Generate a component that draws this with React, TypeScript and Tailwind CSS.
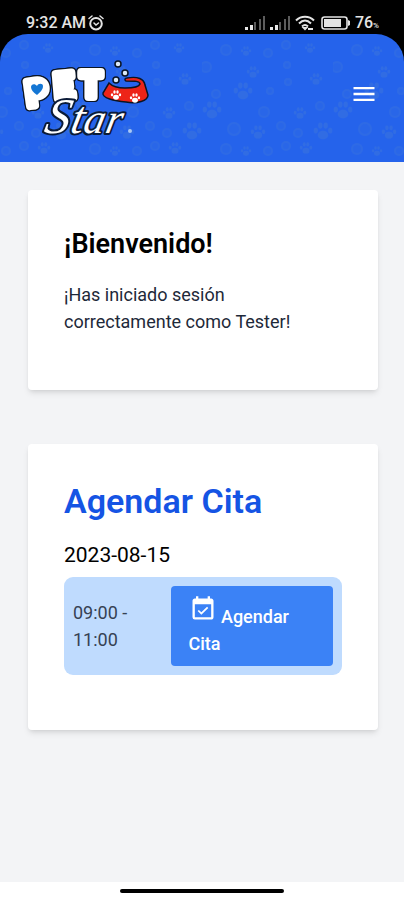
import { MdEventAvailable, MdMenu } from "react-icons/md";

const spots: [number, number, number][] = [
  [24, 16, 5], [66, 19, 4], [84, 11, 4], [85, 31, 3], [86, 48, 3], [68, 57, 3],
  [62, 78, 5], [118, 72, 4], [32, 95, 6], [79, 92, 4], [96, 99, 4], [24, 115, 5],
  [84, 112, 4], [66, 117, 4], [4, 33, 5], [14, 60, 4],
];
const paws: [number, number, number][] = [
  [44, 17, 5], [51, 38, 6], [114, 45, 6], [41, 57, 9], [10, 76, 9], [98, 79, 6],
  [56, 98, 7], [121, 97, 9], [104, 114, 6], [44, 117, 5], [108, 14, 5],
];

function Paw({ x, y, s }: { x: number; y: number; s: number }) {
  return (
    <g transform={`translate(${x} ${y}) scale(${s})`}>
      <ellipse cx="0" cy="0.45" rx="0.58" ry="0.48" />
      <ellipse cx="-0.8" cy="-0.05" rx="0.23" ry="0.32" />
      <ellipse cx="-0.3" cy="-0.6" rx="0.24" ry="0.34" />
      <ellipse cx="0.3" cy="-0.6" rx="0.24" ry="0.34" />
      <ellipse cx="0.8" cy="-0.05" rx="0.23" ry="0.32" />
    </g>
  );
}

function PatternBackground() {
  return (
    <svg className="absolute inset-0 size-full" aria-hidden="true">
      <defs>
        <pattern id="pets" x="71" y="0" width="131" height="128" patternUnits="userSpaceOnUse">
          <g fill="#6b9bb8" opacity="0.16">
            {paws.map(([x, y, s]) => (
              <Paw key={`${x}-${y}`} x={x} y={y} s={s} />
            ))}
          </g>
          <g fill="#6b9bb8" fillOpacity="0.4" stroke="#6b9bb8" strokeWidth="2" opacity="0.12">
            {spots.map(([x, y, r]) => (
              <circle key={`${x}-${y}`} cx={x} cy={y} r={r} />
            ))}
          </g>
        </pattern>
      </defs>
      <rect width="100%" height="100%" fill="url(#pets)" />
    </svg>
  );
}

function Logo() {
  return (
    <svg viewBox="0 0 132 84" className="h-[84px] w-[132px] overflow-visible" role="img" aria-label="Pet Star">
      <g
        className="[filter:drop-shadow(1px_0_0_#0b1524)_drop-shadow(-1px_0_0_#0b1524)_drop-shadow(0_1px_0_#0b1524)_drop-shadow(0_-1px_0_#0b1524)]"
        fill="#fff"
        stroke="#fff"
        strokeWidth="8"
        strokeLinejoin="round"
        fontFamily="Lato, sans-serif"
        fontWeight="900"
        textAnchor="middle"
      >
        <text x="18" y="49" fontSize="34" transform="rotate(-8 18 49)">P</text>
        <text x="45" y="42" fontSize="34" transform="rotate(-5 45 42)">E</text>
        <text x="71" y="41" fontSize="34">T</text>
      </g>
      <path d="M17 39c-4-3-6-5-6-8 0-3 4-4 6-1 1-3 6-3 6 0 0 4-3 6-6 9z" fill="#1476d4" />
      <g stroke="#0b1524" strokeWidth="1.5">
        <path
          d="M89 27c3 3 9 5 16 5 6 0 14-1 15-4 0-3-5-3-14-3-2-1-1-3 1-3 11-2 17 1 18 7l3 10c0 6-11 9-22 7-12-1-24-4-23-9z"
          fill="#ed2418"
        />
        <circle cx="98" cy="8" r="3" fill="#dbe9f7" />
        <circle cx="105" cy="17" r="3" fill="#dbe9f7" />
        <circle cx="96" cy="24" r="3" fill="#dbe9f7" />
      </g>
      <g fill="#fff">
        <Paw x={96} y={39} s={5} />
        <Paw x={115} y={42} s={5} />
      </g>
      <g
        fontStyle="italic"
        fontFamily="'Liberation Serif', serif"
        fill="#fff"
        stroke="#0b1b38"
        strokeWidth="4"
        strokeLinejoin="round"
        paintOrder="stroke"
        transform="translate(0 77) skewX(-12)"
      >
        <text fontSize="50">
          <tspan x="23">S</tspan>
          <tspan x="49" fontSize="46">t</tspan>
          <tspan x="62" fontSize="42">a</tspan>
          <tspan x="84" fontSize="42">r</tspan>
        </text>
      </g>
      <circle cx="110" cy="75" r="2" fill="#a9c8f5" />
    </svg>
  );
}

function Signal() {
  return (
    <svg viewBox="0 0 21 14" className="h-[14px] w-[21px]" aria-hidden="true">
      <path d="M0 11h3v3H0zM5 9h3v5H5z" fill="#e8e8e8" />
      <path d="M9 6h2v8H9zM14 3h2v11h-2zM18 0h2v14h-2z" fill="#5c5c5c" />
    </svg>
  );
}

function StatusBar() {
  return (
    <div className="flex h-[34px] items-end justify-between pr-[25px] pl-[26px] pb-[1px] text-[#e4e4e4]">
      <div className="flex items-center gap-[2px] leading-5 font-medium">
        <span>9:32 AM</span>
        <svg viewBox="0 0 16 16" className="size-4" fill="none" stroke="currentColor" strokeWidth="2" strokeLinecap="round" aria-hidden="true">
          <circle cx="8" cy="8.7" r="5.8" />
          <path d="M6 8l2 2 2.500-2M1 3.500L4 1M15 3.500L12 1" strokeWidth="1.500" />
        </svg>
      </div>
      <div className="flex h-5 items-center gap-1 leading-5 font-medium">
        <Signal />
        <Signal />
        <svg viewBox="0 0 20 16" className="h-4 w-5" fill="none" stroke="currentColor" strokeWidth="2" aria-hidden="true">
          <path d="M1 5.500c5-5 13-5 18 0M4 8.500c4-4 8-4 12 0M7 11.500c2-2 4-2 6 0" />
          <path d="M9 13h2l-1 1zM13 14h5" />
        </svg>
        <svg viewBox="0 0 30 14" className="ml-[2px] h-[14px] w-[30px]" aria-hidden="true">
          <rect x="1" y="1" width="25" height="12" rx="2.500" fill="none" stroke="currentColor" strokeWidth="1.600" />
          <rect x="3" y="3" width="17" height="8" fill="currentColor" />
          <path d="M27 4l2 1v4l-2 1z" fill="currentColor" />
        </svg>
        <span className="flex items-baseline">
          76<span className="text-[8px] leading-none">%</span>
        </span>
      </div>
    </div>
  );
}

export default function App() {
  return (
    <div className="flex min-h-screen flex-col bg-white font-['Roboto',sans-serif] text-black">
      <div className="bg-black">
        <StatusBar />
        <header className="relative flex h-32 items-center justify-between overflow-hidden rounded-t-[28px] bg-[#2563eb] pr-[26px] pl-5">
          <PatternBackground />
          <a href="#inicio" className="relative">
            <Logo />
          </a>
          <button type="button" aria-label="Menú" className="relative mb-2 text-white">
            <MdMenu className="size-7" />
          </button>
        </header>
      </div>

      <main className="flex flex-1 flex-col gap-[54px] bg-gray-100 pt-7 pr-[26px] pb-7 pl-7">
        <section className="rounded-[4px] bg-white px-9 pt-9 pb-[55px] shadow-md">
          <h2 className="text-[27px] leading-9 font-semibold">¡Bienvenido!</h2>
          <p className="mt-[19px] text-[18px] leading-[27px] text-gray-800">
            ¡Has iniciado sesión correctamente como Tester!
          </p>
        </section>

        <section className="rounded-[4px] bg-white px-9 pt-9 pb-[55px] shadow-md">
          <h1 className="text-[34px] leading-[42px] font-semibold text-[#1554e4]">Agendar Cita</h1>
          <h3 className="mt-5 text-[21px] leading-[27px]">2023-08-15</h3>
          <div className="mt-2 grid grid-cols-[3fr_5fr] items-center rounded-[9px] bg-[#bfdbfe] p-[9px]">
            <p className="text-[18px] leading-[27px] text-gray-700">09:00 - 11:00</p>
            <button
              type="button"
              className="rounded-[4px] bg-[#3b82f6] px-[18px] py-[9px] text-left text-[18px] leading-[27px] font-medium text-white"
            >
              <MdEventAvailable className="inline size-7 align-baseline" /> Agendar Cita
            </button>
          </div>
        </section>
      </main>

      <footer className="flex h-[18px] justify-center bg-white pt-[7px]">
        <div className="h-1 w-[164px] rounded-full bg-black" />
      </footer>
    </div>
  );
}
